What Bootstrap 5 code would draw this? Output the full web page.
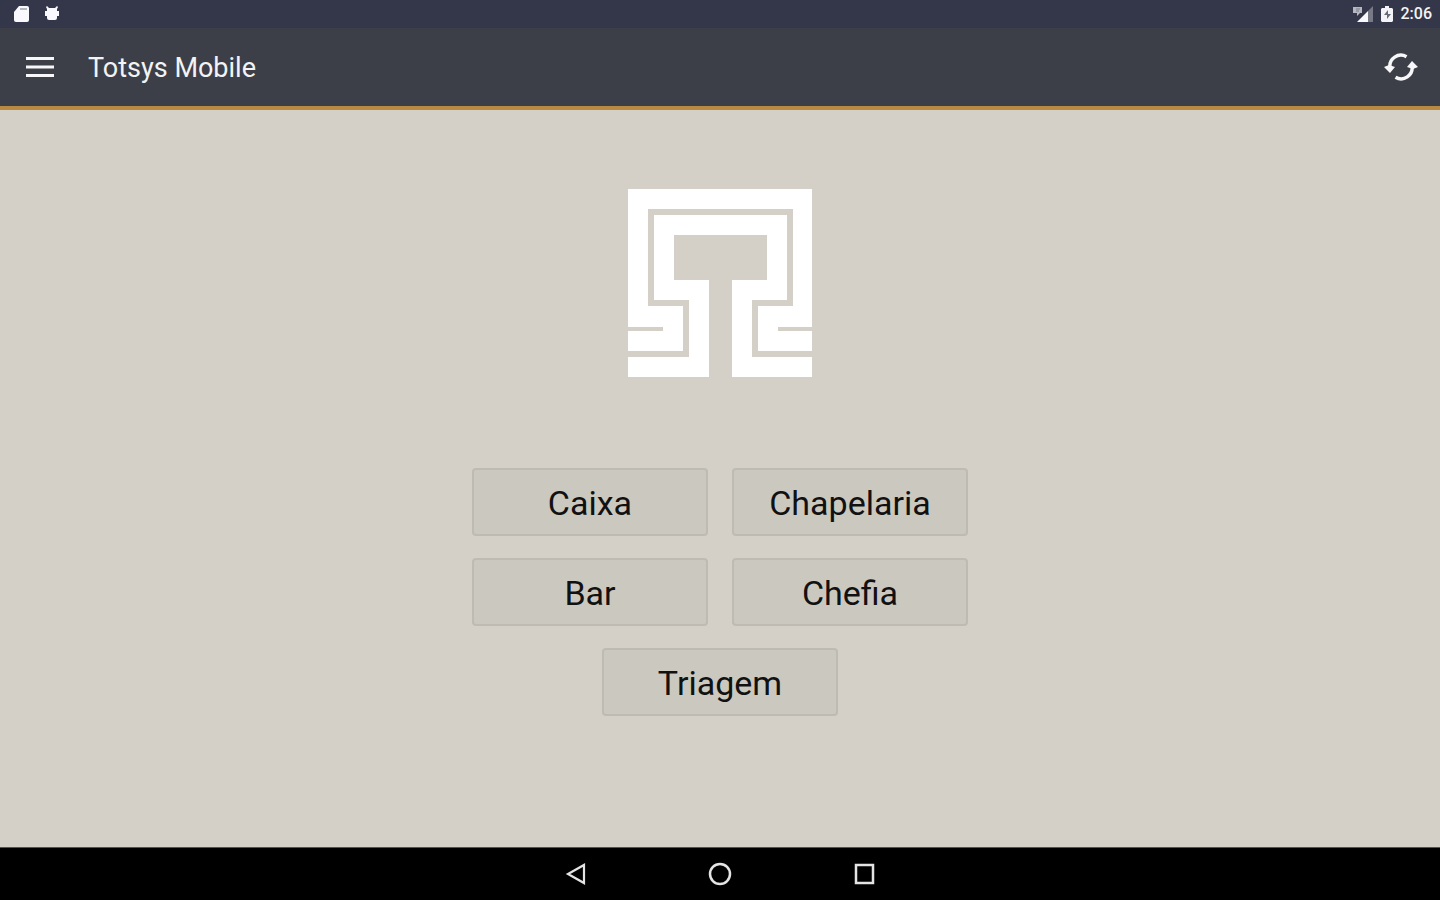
<!DOCTYPE html>
<html lang="pt">
<head>
<meta charset="utf-8">
<meta name="viewport" content="width=device-width, initial-scale=1">
<title>Totsys Mobile</title>
<link href="https://cdn.jsdelivr.net/npm/bootstrap@5.3.0/dist/css/bootstrap.min.css" rel="stylesheet">
<style>
  body { font-family: Roboto, sans-serif; background: #d4d0c8; color: #111; }
  svg { display: block; }
  .status-bar { background: #34374a; height: 28px; padding: 0 8px 0 14px; color: #f4f4f6; }
  .clock { font-size: 16px; line-height: 28px; font-weight: 500; }
  .app-bar { background: #3c3f48; height: 82px; border-bottom: 4px solid #b98a42; padding: 0 18px 0 20px; }
  .app-title { font-size: 27px; line-height: 36px; font-weight: 400; color: #f3f3f5; padding: 2px 0 0 28px; }
  .icon-btn { padding: 4px; border: 0; color: #f7f7fa; }
  .app-main { padding: 79px 16px 48px; }
  .logo { margin-bottom: 91px; }
  .choices { gap: 22px 24px; max-width: 496px; }
  .choice { width: 236px; height: 68px; padding: 2px 0 0; font-size: 34px; line-height: 44px; border: 2px solid #bebbb3; border-radius: 4px; background: #cbc8bf; color: #111; }
  .choice:hover, .choice:active { background: #c2bfb6 !important; border-color: #b2afa7 !important; }
  .system-nav { background: #000; height: 53px; gap: 112px; border-top: 1px solid #55554f; }
</style>
</head>
<body class="d-flex flex-column min-vh-100">
  <div class="status-bar d-flex align-items-center justify-content-between">
    <div class="d-flex align-items-center gap-3">
      <svg width="15" height="18" viewBox="0 0 15 18" aria-hidden="true"><path d="M5 1h8q2 0 2 2v12q0 2-2 2H2q-2 0-2-2V7z" fill="#fafafe"/><path d="M6 4h7" stroke="#b5b6be" stroke-width="2"/></svg>
      <svg width="14" height="18" viewBox="0 0 14 18" aria-hidden="true"><path d="M2 1l2 2h6l2-2 1 1-1 2v2h2v5h-2v2q0 2-2 2H4q-2 0-2-2v-2H0V6h2V4L1 2z" fill="#fafafe"/></svg>
    </div>
    <div class="d-flex align-items-center gap-2">
      <svg width="20" height="18" viewBox="0 0 20 18" aria-hidden="true"><path d="M20 1v16h-5V6z" fill="#777986"/><path d="M15 6v11H4z" fill="#fafafe"/><path d="M0 2h9v6H7l-3 3V8H0z" fill="#b6b7c0"/><path d="M3 4h4M3 6h3" stroke="#777a88"/></svg>
      <svg width="12" height="18" viewBox="0 0 12 18" aria-hidden="true"><path d="M4 1h4v2h3l1 1v12l-1 1H1l-1-1V4l1-1h3z" fill="#f4f4f8"/><path d="M7 5l-4 5h3v4l4-5H7z" fill="#666977"/></svg>
      <span class="clock">2:06</span>
    </div>
  </div>

  <header class="app-bar d-flex align-items-center">
    <button class="btn icon-btn" type="button" aria-label="Menu">
      <svg width="32" height="26" viewBox="0 0 32 26"><path d="M2 4.500h28M2 13h28M2 21.500h28" stroke="currentColor" stroke-width="3"/></svg>
    </button>
    <h1 class="app-title mb-0 flex-grow-1">Totsys Mobile</h1>
    <button class="btn icon-btn me-n1" type="button" aria-label="Atualizar">
      <svg width="34" height="28" viewBox="0 0 34 28"><g fill="none" stroke="currentColor" stroke-width="3.400"><path d="M6 15A11 11 0 0 1 22.500 3.800"/><path d="M28 13A11 11 0 0 1 11.500 24.200"/></g><path d="M0 14L5 12L11 14L6 20zM34 14L29 16L23 14L28 8z" fill="currentColor"/></svg>
    </button>
  </header>

  <main class="app-main flex-grow-1 d-flex flex-column align-items-center">
    <svg class="logo" width="184" height="188" viewBox="0 0 184 188" role="img" aria-label="Totsys">
      <path fill="#fff" fill-rule="evenodd" d="M0 0H184V188H104V91H139V46H46V91H81V188H0z"/>
      <g fill="none" stroke="#d4d0c8">
        <path stroke-width="6" d="M0 165H58V114H23V23H162V114H127V165H184"/>
        <path stroke-width="4" d="M0 140H35M150 140H184"/>
      </g>
    </svg>
    <div class="choices d-flex flex-wrap justify-content-center">
      <button class="btn choice" type="button">Caixa</button>
      <button class="btn choice" type="button">Chapelaria</button>
      <button class="btn choice" type="button">Bar</button>
      <button class="btn choice" type="button">Chefia</button>
      <button class="btn choice" type="button">Triagem</button>
    </div>
  </main>

  <nav class="system-nav d-flex align-items-center justify-content-center" aria-label="Sistema">
    <button class="btn icon-btn" type="button" aria-label="Voltar"><svg width="24" height="24" viewBox="0 0 24 24"><path d="M20 3v18L4 12z" fill="none" stroke="#e4e4e4" stroke-width="2.200"/></svg></button>
    <button class="btn icon-btn" type="button" aria-label="Início"><svg width="24" height="24" viewBox="0 0 24 24"><circle cx="12" cy="12" r="10" fill="none" stroke="#e4e4e4" stroke-width="2.500"/></svg></button>
    <button class="btn icon-btn" type="button" aria-label="Recentes"><svg width="24" height="24" viewBox="0 0 24 24"><rect x="4" y="3" width="17" height="18" fill="none" stroke="#e4e4e4" stroke-width="2.500"/></svg></button>
  </nav>
  <script src="https://cdn.jsdelivr.net/npm/bootstrap@5.3.0/dist/js/bootstrap.bundle.min.js"></script>
</body>
</html>
